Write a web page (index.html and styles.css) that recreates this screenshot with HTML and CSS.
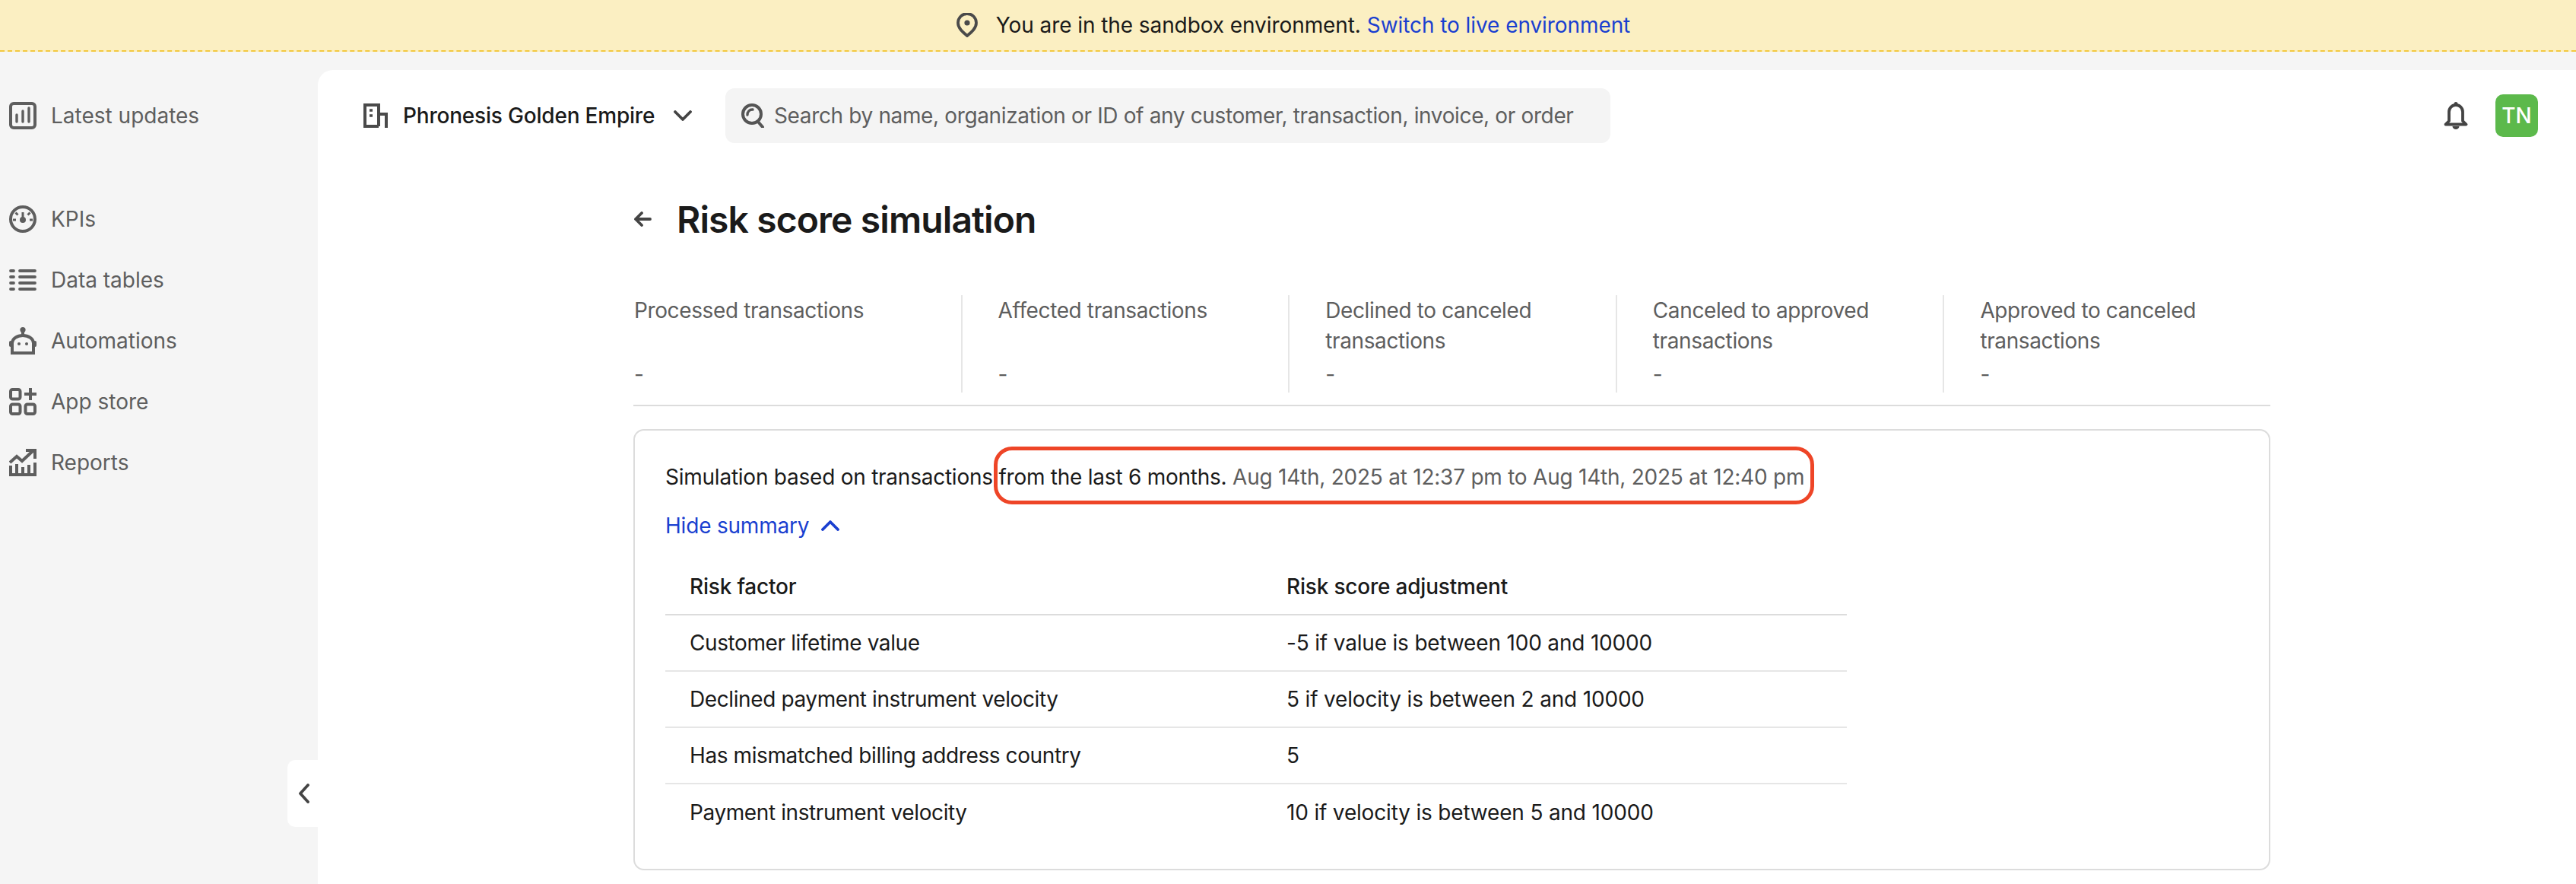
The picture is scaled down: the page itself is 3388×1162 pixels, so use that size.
FILE: index.html
```html
<!DOCTYPE html>
<html lang="en">
<head>
    <meta charset="UTF-8">
    <meta name="viewport" content="width=device-width, initial-scale=1.0">
    <title>Risk score simulation</title>
    <link rel="stylesheet" href="styles.css">
</head>
<body>
    <div class="banner">
        <svg class="banner-icon" viewBox="0 0 28 32" fill="none" stroke="#4a4a4a" stroke-width="3.8">
            <path d="M14 30 C8 25 2 20 2 13 A12 12 0 0 1 26 13 C26 20 20 25 14 30 Z" stroke-linejoin="round"/>
            <circle cx="14" cy="13" r="3.6" fill="#4a4a4a" stroke="none"/>
        </svg>
        <span>You are in the sandbox environment.</span>
        <a class="link" href="#">Switch to live environment</a>
    </div>

    <div class="shell">
        <nav class="sidebar">
            <a class="nav-item nav-first" href="#">
                <svg class="nav-icon" viewBox="0 0 36 36" fill="none" stroke="#5e5e5e" stroke-width="4">
                    <rect x="2" y="2" width="32" height="32" rx="4"/>
                    <path d="M10 17v9M18 12v14M26 8v18" stroke-width="3.4" stroke-linecap="round"/>
                </svg>
                <span>Latest updates</span>
            </a>
            <a class="nav-item" href="#">
                <svg class="nav-icon" viewBox="0 0 36 36" fill="none" stroke="#5e5e5e" stroke-width="4">
                    <circle cx="18" cy="18" r="16"/>
                    <path d="M18 9v9M5 19h4M27 19h4M8.500 9.500l3 3M27.500 9.500l-3 3" stroke-width="3"/>
                    <circle cx="18" cy="19" r="4" fill="#5e5e5e" stroke="none"/>
                </svg>
                <span>KPIs</span>
            </a>
            <a class="nav-item" href="#">
                <svg class="nav-icon" viewBox="0 0 36 36" fill="none" stroke="#5e5e5e" stroke-width="3.800" stroke-linecap="round">
                    <path d="M14 6h20M14 14h20M14 22h20M14 30h20"/>
                    <path d="M2 6h4M2 14h4M2 22h4M2 30h4"/>
                </svg>
                <span>Data tables</span>
            </a>
            <a class="nav-item" href="#">
                <svg class="nav-icon" viewBox="0 0 36 36" fill="none" stroke="#5e5e5e" stroke-width="4">
                    <circle cx="18" cy="3.600" r="3.600" fill="#5e5e5e" stroke="none"/>
                    <path d="M18 6v5"/>
                    <path d="M4 34V21 A14 10 0 0 1 32 21 V34 Z"/>
                    <rect x="0" y="18" width="4" height="8" rx="2" fill="#5e5e5e" stroke="none"/>
                    <rect x="32" y="18" width="4" height="8" rx="2" fill="#5e5e5e" stroke="none"/>
                    <circle cx="13" cy="22" r="2" fill="#5e5e5e" stroke="none"/>
                    <circle cx="23" cy="22" r="2" fill="#5e5e5e" stroke="none"/>
                </svg>
                <span>Automations</span>
            </a>
            <a class="nav-item" href="#">
                <svg class="nav-icon" viewBox="0 0 36 36" fill="none" stroke="#5e5e5e" stroke-width="4">
                    <rect x="2" y="2" width="12.500" height="12.500" rx="2.500"/>
                    <rect x="2" y="21.500" width="12.500" height="12.500" rx="2.500"/>
                    <rect x="21.500" y="21.500" width="12.500" height="12.500" rx="2.500"/>
                    <path d="M28 0v16M20 8h16"/>
                </svg>
                <span>App store</span>
            </a>
            <a class="nav-item" href="#">
                <svg class="nav-icon" viewBox="0 0 36 36" fill="none" stroke="#5e5e5e" stroke-width="4">
                    <path d="M1 18l9-8 7 6 15-14"/>
                    <path d="M22 2h12v11"/>
                    <path d="M2 22v12h32V18M10 20v14M18 24v10M26 21v13"/>
                </svg>
                <span>Reports</span>
            </a>
        </nav>

        <main class="panel">
            <button class="collapse-tab" type="button">
                <svg viewBox="0 0 16 26" width="16" height="26" fill="none" stroke="#444" stroke-width="3.800" stroke-linecap="round" stroke-linejoin="round">
                    <path d="M13 2L3 13l10 11"/>
                </svg>
            </button>

            <header class="topbar">
                <div class="org">
                    <svg class="org-icon" viewBox="0 0 32 32" fill="none" stroke="#4a4a4a" stroke-width="4">
                        <path d="M2 30V2h18v28"/>
                        <path d="M20 14h10v18M0 30h20"/>
                        <path d="M8 9h4M8 16h4" stroke-width="3.400"/>
                    </svg>
                    <span class="org-name">Phronesis Golden Empire</span>
                    <svg class="org-chevron" viewBox="0 0 24 14" fill="none" stroke="#444" stroke-width="3.800" stroke-linecap="round" stroke-linejoin="round">
                        <path d="M2 2l10 10L22 2"/>
                    </svg>
                </div>
                <div class="search">
                    <svg class="search-icon" viewBox="0 0 32 32" fill="none" stroke="#555" stroke-width="4">
                        <circle cx="15" cy="14" r="12"/>
                        <path d="M23 24l6 7" stroke-linecap="round"/>
                        <path d="M16 8A6.500 6.500 0 0 0 9 15" stroke-width="3.400" stroke-linecap="round"/>
                    </svg>
                    <span>Search by name, organization or ID of any customer, transaction, invoice, or order</span>
                </div>
                <div class="top-actions">
                    <svg class="bell" viewBox="0 0 32 36" fill="none" stroke="#444" stroke-width="3.800" stroke-linejoin="round">
                        <path d="M7 25V13a9 9 0 0 1 18 0v12l4.500 4.500h-27z"/>
                        <circle cx="16" cy="2.500" r="2.500" fill="#444" stroke="none"/>
                        <path d="M11.500 32h9a4.500 4 0 0 1-9 0z" fill="#444" stroke="none"/>
                    </svg>
                    <div class="avatar">TN</div>
                </div>
            </header>

            <div class="content">
                <div class="page-title">
                    <svg class="back-arrow" viewBox="0 0 24 20" fill="none" stroke="#444" stroke-width="3.800" stroke-linecap="round" stroke-linejoin="round">
                        <path d="M11 2l-8 8 8 8M3 10h19"/>
                    </svg>
                    <h1>Risk score simulation</h1>
                </div>

                <section class="stats">
                    <div class="stat">
                        <div class="stat-label">Processed transactions</div>
                        <div class="stat-value">-</div>
                    </div>
                    <div class="stat">
                        <div class="stat-label">Affected transactions</div>
                        <div class="stat-value">-</div>
                    </div>
                    <div class="stat">
                        <div class="stat-label">Declined to canceled transactions</div>
                        <div class="stat-value">-</div>
                    </div>
                    <div class="stat">
                        <div class="stat-label">Canceled to approved transactions</div>
                        <div class="stat-value">-</div>
                    </div>
                    <div class="stat">
                        <div class="stat-label">Approved to canceled transactions</div>
                        <div class="stat-value">-</div>
                    </div>
                </section>

                <section class="summary-card">
                    <p class="summary-line">Simulation based on transactions <span class="highlighted">from the last 6 months. <span class="muted">Aug 14th, 2025 at 12:37 pm to Aug 14th, 2025 at 12:40 pm</span></span></p>
                    <a class="link hide-summary" href="#">
                        Hide summary
                        <svg class="hide-chevron" viewBox="0 0 24 14" fill="none" stroke="#1a3fd0" stroke-width="3.800" stroke-linecap="round" stroke-linejoin="round">
                            <path d="M2 12L12 2l10 10"/>
                        </svg>
                    </a>
                    <table class="factors">
                        <thead>
                            <tr>
                                <th>Risk factor</th>
                                <th>Risk score adjustment</th>
                            </tr>
                        </thead>
                        <tbody>
                            <tr>
                                <td>Customer lifetime value</td>
                                <td>-5 if value is between 100 and 10000</td>
                            </tr>
                            <tr>
                                <td>Declined payment instrument velocity</td>
                                <td>5 if velocity is between 2 and 10000</td>
                            </tr>
                            <tr>
                                <td>Has mismatched billing address country</td>
                                <td>5</td>
                            </tr>
                            <tr>
                                <td>Payment instrument velocity</td>
                                <td>10 if velocity is between 5 and 10000</td>
                            </tr>
                        </tbody>
                    </table>
                </section>
            </div>
        </main>
    </div>
</body>
</html>
```

FILE: styles.css
```css
* {
    box-sizing: border-box;
}
html, body {
    height: 100%;
}
body {
    margin: 0;
    overflow: hidden;
    font-family: Inter, "Liberation Sans", sans-serif;
    font-size: 28px;
    color: #1a1a1a;
    background-color: #f5f5f5;
}
a {
    text-decoration: none;
}
.link {
    color: #1a3fd0;
}

/* sandbox banner */
.banner {
    height: 68px;
    display: flex;
    align-items: center;
    justify-content: center;
    gap: 8px;
    padding-left: 14px;
    letter-spacing: -0.08px;
    background-color: #fbefc2;
    border-bottom: 2px dashed #f3c83f;
}
.banner-icon {
    width: 28px;
    height: 32px;
    margin-right: 16px;
}

.shell {
    display: flex;
    height: calc(100% - 68px);
    padding-top: 24px;
}

/* left nav */
.sidebar {
    width: 418px;
    flex: none;
    padding: 20px 0 0 12px;
}
.nav-item {
    height: 80px;
    display: flex;
    align-items: center;
    gap: 19px;
    color: #5e5e5e;
}
.nav-first {
    margin-bottom: 56px;
}
.nav-icon {
    width: 36px;
    height: 36px;
    flex: none;
}

/* main panel */
.panel {
    position: relative;
    flex: 1;
    min-width: 0;
    background-color: #fff;
    border-top-left-radius: 20px;
}
.collapse-tab {
    position: absolute;
    left: -40px;
    top: 907px;
    width: 40px;
    height: 88px;
    padding: 0 0 0 4px;
    border: none;
    background-color: #fff;
    border-radius: 10px 0 0 10px;
    display: flex;
    align-items: center;
    justify-content: center;
}
.topbar {
    display: flex;
    align-items: center;
    height: 72px;
    margin-top: 24px;
    padding: 0 50px 0 60px;
}
.org {
    display: flex;
    align-items: center;
    width: 476px;
    flex: none;
}
.org-icon {
    width: 32px;
    height: 32px;
    margin-right: 20px;
}
.org-name {
    font-weight: 500;
    letter-spacing: -0.2px;
}
.org-chevron {
    width: 24px;
    height: 14px;
    margin-left: 25px;
}
.search {
    width: 1164px;
    height: 72px;
    display: flex;
    align-items: center;
    gap: 12px;
    padding-left: 20px;
    background-color: #f4f4f4;
    border-radius: 12px;
    color: #5e5e5e;
    letter-spacing: -0.36px;
}
.search-icon {
    width: 32px;
    height: 32px;
}
.top-actions {
    margin-left: auto;
    display: flex;
    align-items: center;
    gap: 36px;
}
.bell {
    width: 32px;
    height: 36px;
}
.avatar {
    width: 56px;
    height: 56px;
    display: flex;
    align-items: center;
    justify-content: center;
    border-radius: 10px;
    background-color: #5cb94b;
    color: #fff;
    font-weight: 500;
}

.content {
    width: 2153px;
    margin-left: 415px;
}
.page-title {
    display: flex;
    align-items: center;
    gap: 33px;
    height: 60px;
    margin-top: 70px;
}
.back-arrow {
    width: 24px;
    height: 20px;
}
h1 {
    margin: 0;
    font-size: 48px;
    font-weight: 600;
    letter-spacing: -0.9px;
}

/* stat row */
.stats {
    display: grid;
    grid-template-columns: repeat(5, 1fr);
    margin-top: 70px;
    padding-bottom: 16px;
    border-bottom: 2px solid #dcdcdc;
}
.stat {
    height: 128px;
    padding-left: 47px;
    padding-right: 60px;
    border-left: 2px solid #e6e6e6;
    color: #5e5e5e;
    line-height: 40px;
    letter-spacing: -0.38px;
}
.stat:first-child {
    padding-left: 1px;
    border-left: none;
}
.stat-label {
    height: 84px;
}

/* summary card */
.summary-card {
    margin-top: 30px;
    padding: 39px 40px 38px;
    border: 2px solid #dcdcdc;
    border-radius: 14px;
}
.summary-line {
    margin: 0;
    line-height: 44px;
    letter-spacing: -0.24px;
}
.highlighted {
    position: relative;
}
/* red annotation drawn over the screenshot */
.highlighted::after {
    content: "";
    position: absolute;
    left: -6px;
    right: -13px;
    top: -23px;
    bottom: -19px;
    border: 5px solid #ee4527;
    border-radius: 24px;
}
.hide-summary {
    display: flex;
    align-items: center;
    gap: 16px;
    height: 44px;
    margin-top: 20px;
    letter-spacing: -0.2px;
}
.muted {
    color: #5e5e5e;
}
.hide-chevron {
    width: 24px;
    height: 14px;
}
.factors {
    width: 1554px;
    margin-top: 21px;
    border-collapse: collapse;
    table-layout: fixed;
}
.factors th, .factors td {
    height: 74px;
    padding: 0 32px;
    text-align: left;
    font-weight: 400;
}
.factors th {
    font-weight: 500;
    border-bottom: 2px solid #dcdcdc;
    letter-spacing: -0.2px;
}
.factors td {
    border-bottom: 2px solid #e6e6e6;
    letter-spacing: -0.18px;
}
.factors td:first-child {
    letter-spacing: -0.4px;
}
.factors tr:last-child td {
    border-bottom: none;
}
.factors th:first-child {
    width: 785px;
}
```
